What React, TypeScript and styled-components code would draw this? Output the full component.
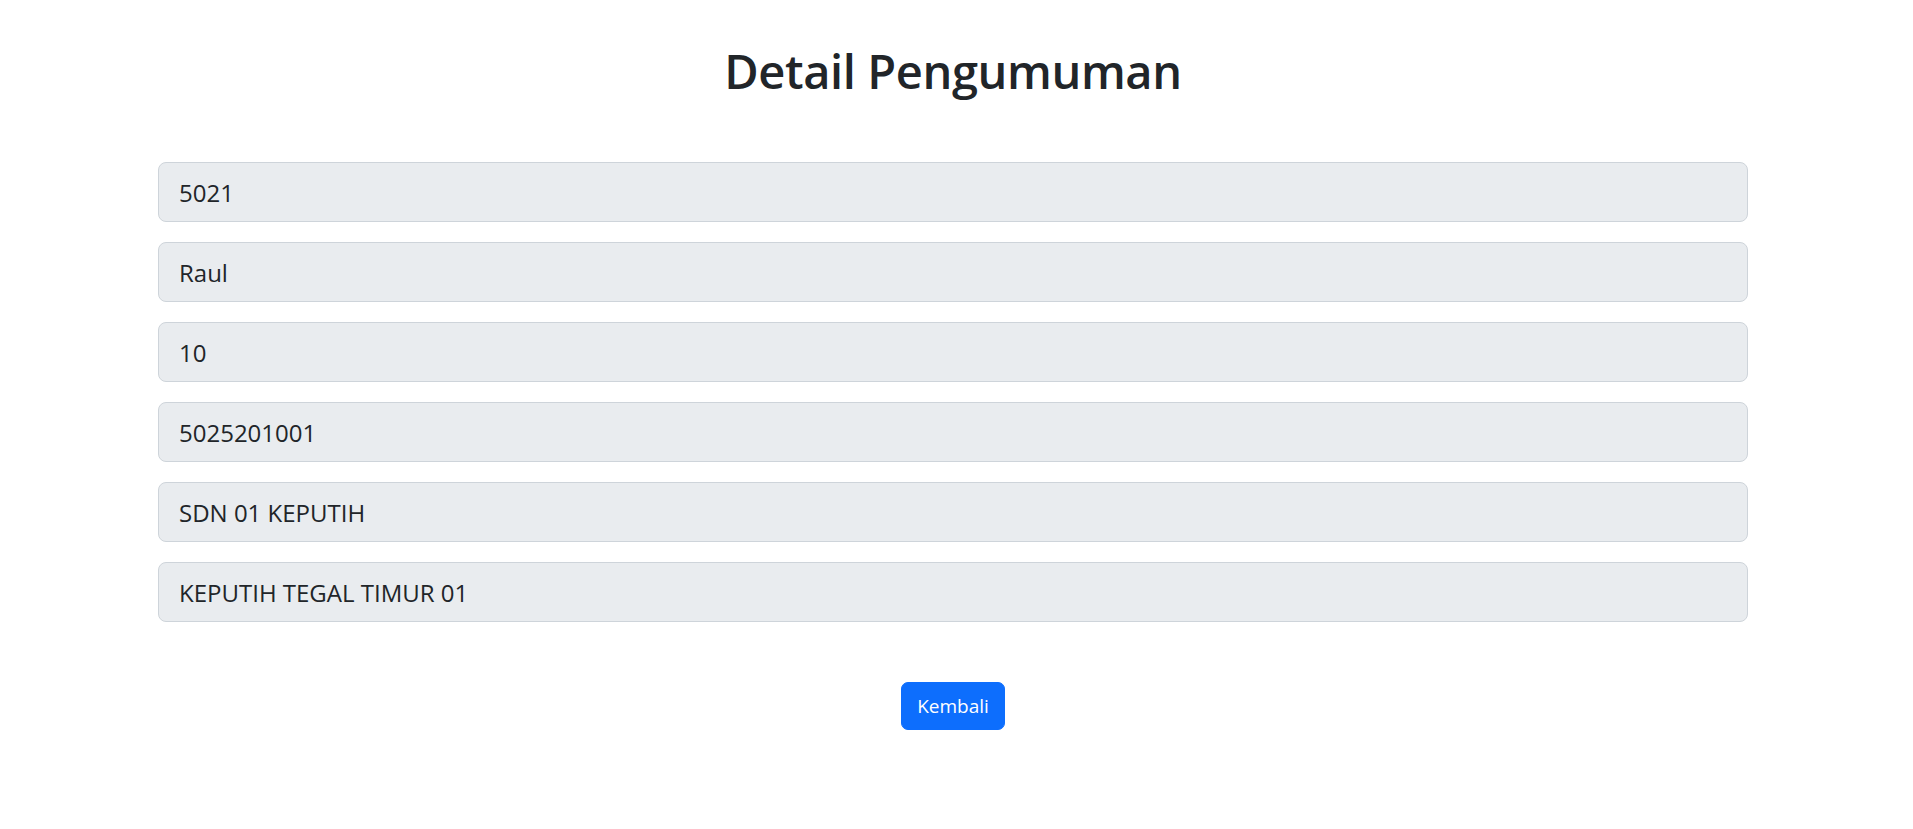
import React from "react";
import styled, { createGlobalStyle } from "styled-components";

const Global = createGlobalStyle`
  html, body { margin: 0; padding: 0; background: #ffffff; }
  body {
    font-family: "Open Sans", "Noto Sans", "Liberation Sans", sans-serif;
    color: #212529;
  }
  * { box-sizing: border-box; }
`;

const Page = styled.div`
  padding: 0 7px 0 0;
  min-height: 829px;
`;

const Container = styled.main`
  max-width: 1590px;
  margin: 0 auto;
  padding-top: 41px;
  display: flex;
  flex-direction: column;
  align-items: stretch;
`;

const Title = styled.h1`
  margin: 0 0 61px;
  text-align: center;
  font-size: 47px;
  line-height: 60px;
  font-weight: 600;
  color: #212529;
  letter-spacing: -0.4px;
`;

const Fields = styled.div`
  display: flex;
  flex-direction: column;
  gap: 20px;
`;

const Field = styled.input`
  display: block;
  width: 100%;
  height: 60px;
  padding: 10px 20px;
  font-family: inherit;
  font-size: 24px;
  color: #212529;
  background: #e9ecef;
  border: 1px solid #ced4da;
  border-radius: 8px;
  outline: none;
  opacity: 1;
  -webkit-text-fill-color: #212529;
`;

const Actions = styled.div`
  display: flex;
  justify-content: center;
  margin-top: 60px;
`;

const Button = styled.button`
  height: 48px;
  padding: 0 15px;
  font-family: inherit;
  font-size: 19px;
  color: #ffffff;
  background: #0d6efd;
  border: 1px solid #0d6efd;
  border-radius: 7px;
  cursor: pointer;
`;

const values = [
  "5021",
  "Raul",
  "10",
  "5025201001",
  "SDN 01 KEPUTIH",
  "KEPUTIH TEGAL TIMUR 01",
];

export default function App() {
  return (
    <Page>
      <Global />
      <Container>
        <Title>Detail Pengumuman</Title>
        <Fields>
          {values.map((v, i) => (
            <Field key={i} type="text" value={v} disabled readOnly />
          ))}
        </Fields>
        <Actions>
          <Button type="button">Kembali</Button>
        </Actions>
      </Container>
    </Page>
  );
}
